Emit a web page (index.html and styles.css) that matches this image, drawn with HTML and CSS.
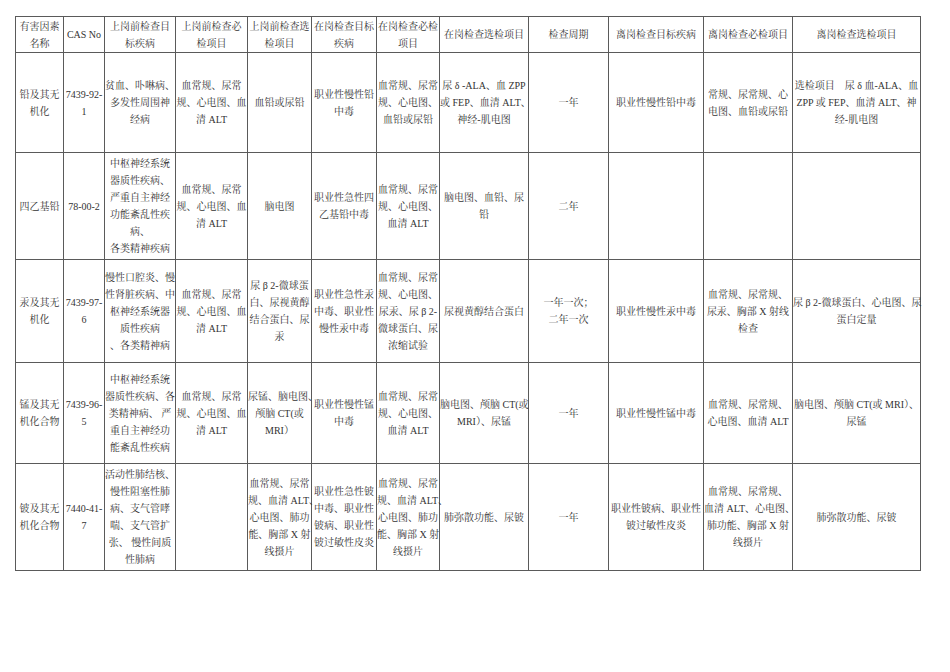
FILE: index.html
```html
<!DOCTYPE html>
<html lang="zh-CN">
<head>
<meta charset="utf-8">
<title>职业健康检查项目</title>
<link rel="stylesheet" href="styles.css">
</head>
<body>
<table class="grid">
<colgroup>
<col class="c1"><col class="c2"><col class="c3"><col class="c4"><col class="c5"><col class="c6"><col class="c7"><col class="c8"><col class="c9"><col class="c10"><col class="c11"><col class="c12">
</colgroup>
<tr class="head">
<td>有害因素<br>名称</td>
<td>CAS No</td>
<td>上岗前检查目<br>标疾病</td>
<td>上岗前检查必<br>检项目</td>
<td>上岗前检查选<br>检项目</td>
<td>在岗检查目标<br>疾病</td>
<td>在岗检查必检<br>项目</td>
<td>在岗检查选检项目</td>
<td>检查周期</td>
<td>离岗检查目标疾病</td>
<td>离岗检查必检项目</td>
<td>离岗检查选检项目</td>
</tr>
<tr class="r1">
<td>铅及其无<br>机化</td>
<td>7439-92-<br>1</td>
<td>贫血、卟啉病、<br>多发性周围神<br>经病</td>
<td>血常规、尿常<br>规、心电图、血<br>清 ALT</td>
<td>血铅或尿铅</td>
<td>职业性慢性铅<br>中毒</td>
<td>血常规、尿常<br>规、心电图、<br>血铅或尿铅</td>
<td>尿 δ -ALA、血 ZPP<br>或 FEP、血清 ALT、<br>神经-肌电图</td>
<td>一年</td>
<td>职业性慢性铅中毒</td>
<td>常规、尿常规、心<br>电图、血铅或尿铅</td>
<td>选检项目　尿 δ 血-ALA、血<br>ZPP 或 FEP、血清 ALT、神<br>经-肌电图</td>
</tr>
<tr class="r2">
<td>四乙基铅</td>
<td>78-00-2</td>
<td>中枢神经系统<br>器质性疾病、<br>严重自主神经<br>功能紊乱性疾<br>病、<br>各类精神疾病</td>
<td>血常规、尿常<br>规、心电图、血<br>清 ALT</td>
<td>脑电图</td>
<td>职业性急性四<br>乙基铅中毒</td>
<td>血常规、尿常<br>规、心电图、<br>血清 ALT</td>
<td>脑电图、血铅、尿<br>铅</td>
<td>二年</td>
<td></td>
<td></td>
<td></td>
</tr>
<tr class="r3">
<td>汞及其无<br>机化</td>
<td>7439-97-<br>6</td>
<td>慢性口腔炎、慢<br>性肾脏疾病、中<br>枢神经系统器<br>质性疾病<br>、各类精神病</td>
<td>血常规、尿常<br>规、心电图、血<br>清 ALT</td>
<td>尿 β 2-微球蛋<br>白、尿视黄醇<br>结合蛋白、尿<br>汞</td>
<td>职业性急性汞<br>中毒、职业性<br>慢性汞中毒</td>
<td>血常规、尿常<br>规、心电图、<br>尿汞、尿 β 2-<br>微球蛋白、尿<br>浓缩试验</td>
<td>尿视黄醇结合蛋白</td>
<td>一年一次；<br>二年一次</td>
<td>职业性慢性汞中毒</td>
<td>血常规、尿常规、<br>尿汞、胸部 X 射线<br>检查</td>
<td>尿 β 2-微球蛋白、心电图、尿<br>蛋白定量</td>
</tr>
<tr class="r4">
<td>锰及其无<br>机化合物</td>
<td>7439-96-<br>5</td>
<td>中枢神经系统<br>器质性疾病、各<br>类精神病、 严<br>重自主神经功<br>能紊乱性疾病</td>
<td>血常规、尿常<br>规、心电图、血<br>清 ALT</td>
<td>尿锰、脑电图、<br>颅脑 CT(或<br>MRI）</td>
<td>职业性慢性锰<br>中毒</td>
<td>血常规、尿常<br>规、心电图、<br>血清 ALT</td>
<td>脑电图、颅脑 CT(或<br>MRI）、尿锰</td>
<td>一年</td>
<td>职业性慢性锰中毒</td>
<td>血常规、尿常规、<br>心电图、血清 ALT</td>
<td>脑电图、颅脑 CT(或 MRI）、<br>尿锰</td>
</tr>
<tr class="r5">
<td>铍及其无<br>机化合物</td>
<td>7440-41-<br>7</td>
<td>活动性肺结核、<br>慢性阻塞性肺<br>病、支气管哮<br>喘、支气管扩<br>张、 慢性间质<br>性肺病</td>
<td></td>
<td>血常规、尿常<br>规、血清 ALT、<br>心电图、肺功<br>能、胸部 X 射<br>线摄片</td>
<td>职业性急性铍<br>中毒、职业性<br>铍病、职业性<br>铍过敏性皮炎</td>
<td>血常规、尿常<br>规、血清 ALT、<br>心电图、肺功<br>能、胸部 X 射<br>线摄片</td>
<td>肺弥散功能、尿铍</td>
<td>一年</td>
<td>职业性铍病、职业性<br>铍过敏性皮炎</td>
<td>血常规、尿常规、<br>血清 ALT、心电图、<br>肺功能、胸部 X 射<br>线摄片</td>
<td>肺弥散功能、尿铍</td>
</tr>
</table>
</body>
</html>
```

FILE: styles.css
```css
html, body {
  margin: 0;
  padding: 0;
  background: #ffffff;
}

body {
  padding: 16px 0 0 15px;
  font-family: "Liberation Serif", "Noto Serif CJK SC", "Noto Sans CJK SC", serif;
  font-size: 10px;
  line-height: 17px;
  color: #333333;
}

.grid {
  border-collapse: collapse;
  table-layout: fixed;
  width: 905px;
}

.grid td {
  border: 1px solid #5a5a5a;
  padding: 0;
  text-align: center;
  vertical-align: middle;
  white-space: nowrap;
  overflow: visible;
}

.c1 { width: 48px; }
.c2 { width: 41px; }
.c3 { width: 71px; }
.c4 { width: 72px; }
.c5 { width: 64px; }
.c6 { width: 65px; }
.c7 { width: 63px; }
.c8 { width: 89px; }
.c9 { width: 80px; }
.c10 { width: 95px; }
.c11 { width: 89px; }
.c12 { width: 128px; }

.head { height: 36px; }
.r1 { height: 100px; }
.r2 { height: 107px; }
.r3 { height: 103px; }
.r4 { height: 101px; }
.r5 { height: 107px; }
```
